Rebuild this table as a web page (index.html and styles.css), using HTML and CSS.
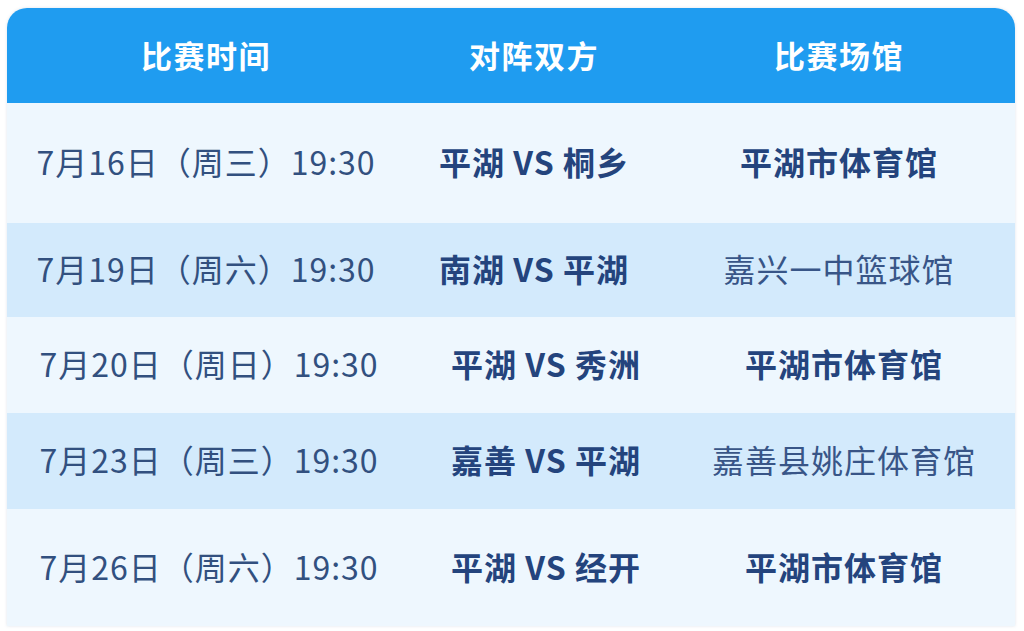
FILE: index.html
```html
<!DOCTYPE html>
<html lang="zh-CN">
<head>
<meta charset="utf-8">
<link rel="stylesheet" href="styles.css">
<title>赛程</title>
</head>
<body>
<div class="card">
  <div class="head">
    <div class="cell">比赛时间</div>
    <div class="cell">对阵双方</div>
    <div class="cell">比赛场馆</div>
  </div>
  <div class="row light first">
    <div class="cell date">7月16日（周三）19:30</div>
    <div class="cell team">平湖 VS 桐乡</div>
    <div class="cell venue bold">平湖市体育馆</div>
  </div>
  <div class="row blue second">
    <div class="cell date">7月19日（周六）19:30</div>
    <div class="cell team">南湖 VS 平湖</div>
    <div class="cell venue">嘉兴一中篮球馆</div>
  </div>
  <div class="row light shift">
    <div class="cell date">7月20日（周日）19:30</div>
    <div class="cell team">平湖 VS 秀洲</div>
    <div class="cell venue bold">平湖市体育馆</div>
  </div>
  <div class="row blue shift">
    <div class="cell date">7月23日（周三）19:30</div>
    <div class="cell team">嘉善 VS 平湖</div>
    <div class="cell venue">嘉善县姚庄体育馆</div>
  </div>
  <div class="row light shift last">
    <div class="cell date">7月26日（周六）19:30</div>
    <div class="cell team">平湖 VS 经开</div>
    <div class="cell venue bold">平湖市体育馆</div>
  </div>
</div>
</body>
</html>
```
FILE: styles.css
```css
html, body {
  margin: 0;
  padding: 0;
  background: #ffffff;
}
body {
  font-family: "Noto Sans CJK SC", "Noto Sans", sans-serif;
  width: 1024px;
  height: 631px;
  overflow: hidden;
}
.card {
  margin: 8px 0 0 7px;
  width: 1008px;
  border-radius: 20px 20px 0 0;
  overflow: hidden;
  box-shadow: 0 0 3px rgba(120, 140, 170, 0.25);
}
.head, .row {
  display: grid;
  grid-template-columns: 398px 258px 1fr;
  align-items: center;
}
.head {
  height: 95px;
  padding-bottom: 3px;
  box-sizing: border-box;
  background: #1f9cf0;
  color: #ffffff;
  font-size: 31px;
  font-weight: 700;
  letter-spacing: 1.5px;
}
.cell {
  text-align: center;
  white-space: nowrap;
}
.row {
  color: #2c4a7e;
  font-size: 32px;
  letter-spacing: 1px;
  box-sizing: border-box;
  padding-bottom: 4px;
}
.light { background: #eef7fe; }
.blue { background: #d3eafc; }
.first { height: 120px; }
.second { height: 94px; }
.shift { height: 96px; }
.last { height: 117px; }
.date {
  font-weight: 400;
  color: #32507f;
}
.team {
  font-weight: 700;
  color: #24447d;
}
.venue {
  font-weight: 400;
  color: #385587;
}
.venue.bold {
  font-weight: 700;
  color: #24447d;
}
.shift .date { padding-left: 6px; }
.shift .team { padding-left: 24px; }
.shift .venue { padding-left: 10px; }
```
